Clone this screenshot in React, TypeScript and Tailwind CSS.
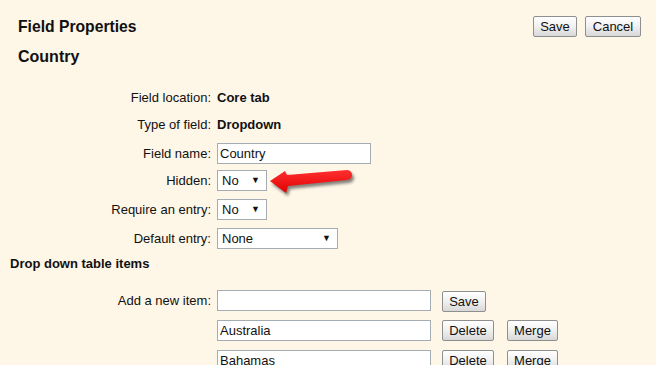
import React from 'react';

const font = { fontFamily: '"Liberation Sans", Arial, sans-serif' };

function Btn({ label, w }: { label: string; w: string }) {
  return (
    <button
      className={`${w} h-[21px] shrink-0 rounded-[2px] border border-[#8e8f8f] bg-gradient-to-b from-[#ffffff] via-[#f0f0f0] to-[#d8d8d8] text-[13px] leading-none text-[#111]`}
    >
      {label}
    </button>
  );
}

function FakeSelect({ value, w }: { value: string; w: string }) {
  return (
    <div className={`${w} h-[21px] flex items-center justify-between border border-[#a5acb2] bg-white pl-[4px] pr-[6px] text-[13px] text-[#111]`}>
      <span>{value}</span>
      <span className="text-[9px] leading-none">▼</span>
    </div>
  );
}

function Row({ label, children, className = '' }: { label: string; children: React.ReactNode; className?: string }) {
  return (
    <div className={`flex items-center h-[21px] ${className}`}>
      <div className="w-[217px] shrink-0 pr-[6px] text-right text-[13px] text-[#111]">{label}</div>
      <div className="flex items-center">{children}</div>
    </div>
  );
}

export default function App() {
  return (
    <div style={font} className="relative w-[656px] h-[365px] overflow-hidden bg-[#fef6e7] text-[#111]">
      {/* Header */}
      <div className="flex items-center justify-between pt-[16px] pl-[18px] pr-[15px]">
        <h1 className="text-[15.7px] font-bold leading-[21px]">Field Properties</h1>
        <div className="flex gap-[8px]">
          <Btn label="Save" w="w-[44px]" />
          <Btn label="Cancel" w="w-[56px]" />
        </div>
      </div>
      <h2 className="mt-[9px] pl-[18px] text-[16px] font-bold leading-[21px]">Country</h2>

      {/* Properties */}
      <div className="mt-[20px]">
        <Row label="Field location:">
          <span className="text-[13px] font-bold">Core tab</span>
        </Row>
        <Row label="Type of field:" className="mt-[6px]">
          <span className="text-[13px] font-bold">Dropdown</span>
        </Row>
        <Row label="Field name:" className="mt-[8px]">
          <div className="w-[154px] h-[21px] border border-[#a5acb2] bg-white pl-[2px] text-[13px] leading-[19px]">Country</div>
        </Row>
        <Row label="Hidden:" className="mt-[6px]">
          <FakeSelect value="No" w="w-[50px]" />
        </Row>
        <Row label="Require an entry:" className="mt-[8px]">
          <FakeSelect value="No" w="w-[50px]" />
        </Row>
        <Row label="Default entry:" className="mt-[8px]">
          <FakeSelect value="None" w="w-[121px]" />
        </Row>
      </div>

      <h3 className="mt-[4px] pl-[10px] text-[13px] font-bold leading-[21px]">Drop down table items</h3>

      {/* Items */}
      <div className="mt-[16px]">
        <Row label="Add a new item:">
          <div className="w-[214px] h-[21px] border border-[#a5acb2] bg-white" />
          <div className="ml-[11px]"><Btn label="Save" w="w-[44px]" /></div>
        </Row>
        {['Australia', 'Bahamas'].map(c => (
          <Row key={c} label="" className="mt-[9px]">
            <div className="w-[214px] h-[21px] border border-[#a5acb2] bg-white pl-[2px] text-[13px] leading-[19px]">{c}</div>
            <div className="ml-[11px] flex gap-[13px]">
              <Btn label="Delete" w="w-[52px]" />
              <Btn label="Merge" w="w-[51px]" />
            </div>
          </Row>
        ))}
      </div>

      {/* Annotation arrow */}
      <svg className="absolute left-[265px] top-[163px]" width="95" height="36" viewBox="0 0 95 36">
        <defs>
          <filter id="sh" x="-20%" y="-40%" width="140%" height="180%">
            <feGaussianBlur stdDeviation="1.5" />
          </filter>
          <linearGradient id="rg" x1="0" y1="0" x2="0" y2="1">
            <stop offset="0" stopColor="#ff3030" />
            <stop offset="1" stopColor="#e00000" />
          </linearGradient>
        </defs>
        <path
          d="M7 21 L22 11 L24 15 L84 10 A5 5 0 0 1 84 20 L25 26 L23 33 Z"
          fill="#333"
          opacity="0.6"
          filter="url(#sh)"
        />
        <path d="M5 18 L20 8 L22 12 L82 7 A5 5 0 0 1 82 17 L23 23 L21 30 Z" fill="url(#rg)" />
      </svg>
    </div>
  );
}
